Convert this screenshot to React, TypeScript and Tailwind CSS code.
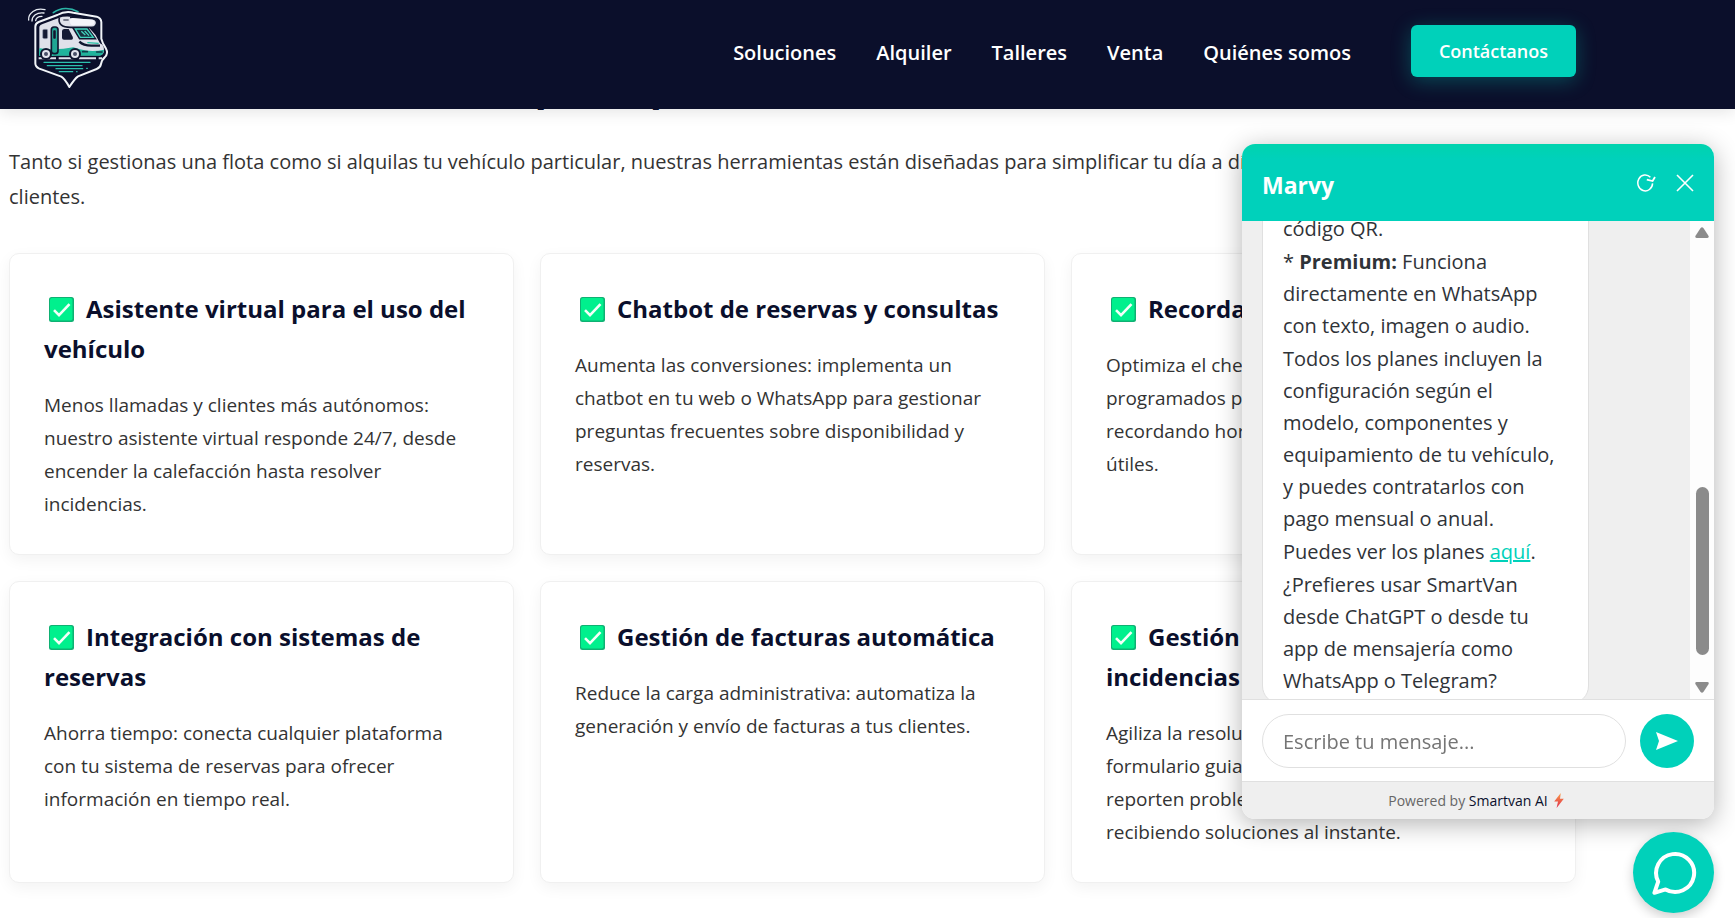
import { ReactNode } from "react";

const navLinks = ["Soluciones", "Alquiler", "Talleres", "Venta", "Quiénes somos"];

const features = [
  {
    title: "Asistente virtual para el uso del vehículo",
    text: "Menos llamadas y clientes más autónomos: nuestro asistente virtual responde 24/7, desde encender la calefacción hasta resolver incidencias.",
  },
  {
    title: "Chatbot de reservas y consultas",
    text: "Aumenta las conversiones: implementa un chatbot en tu web o WhatsApp para gestionar preguntas frecuentes sobre disponibilidad y reservas.",
  },
  {
    title: "Recordatorios automáticos",
    text: "Optimiza el check-in con mensajes breves programados para todos tus clientes, recordando horarios, documentos y consejos útiles.",
  },
  {
    title: "Integración con sistemas de reservas",
    text: "Ahorra tiempo: conecta cualquier plataforma con tu sistema de reservas para ofrecer información en tiempo real.",
  },
  {
    title: "Gestión de facturas automática",
    text: "Reduce la carga administrativa: automatiza la generación y envío de facturas a tus clientes.",
  },
  {
    title: "Gestión automatizada de incidencias",
    text: "Agiliza la resolución de averías mediante un formulario guiado para que todos los clientes reporten problemas desde cualquier lugar, recibiendo soluciones al instante.",
  },
];

function Logo() {
  return (
    <svg viewBox="0 0 285 285" className="h-[95px] w-[95px] shrink-0" fill="none" role="img" aria-label="SmartVan">
      <g stroke="#e6ebf2" strokeWidth="4" strokeLinecap="round">
        <path d="M26 60C24 40 46 22 75 29" />
        <path d="M36 63C36 48 50 36 72 39" />
        <path d="M47 62C48 54 56 49 66 49" />
      </g>
      <path d="M100 38C122 22 150 22 174 35" stroke="#2bb5a6" strokeWidth="5" strokeLinecap="round" />
      <path
        d="M56 66L112 45C126 37 146 35 160 38L230 50Q243 54 244 66V116Q248 132 258 146Q266 160 254 172Q246 178 243 192Q241 203 230 207L174 229Q164 236 148 261Q134 236 124 230L58 206Q46 201 46 190V80Q46 70 56 66Z"
        stroke="#f1f4f8"
        strokeWidth="6"
        strokeLinejoin="round"
      />
      <path d="M58 80Q60 74 68 72L118 53Q128 49 150 50L222 57Q232 60 230 72Q228 82 216 82H206L226 104L240 130Q252 134 252 150Q252 164 240 166H58Z" fill="#dfe1ea" />
      <path d="M58 145Q110 152 160 142L180 148Q215 158 252 149Q251 164 240 167H58Z" fill="#20b49c" />
      <path d="M58 148Q84 150 100 146V168H58Z" fill="#25c0a4" />
      <path d="M118 53Q112 82 152 82H216Q230 80 230 68Q229 58 218 56L150 52" stroke="#10162f" strokeWidth="5" />
      <path d="M150 59Q150 54 158 54L216 59Q225 62 223 70Q221 76 213 76H160Q148 76 150 59Z" fill="#f4f5fa" />
      <path d="M130 60H146" stroke="#10162f" strokeWidth="3" />
      <path d="M236 68V100L226 86V74Z" fill="#10162f" />
      <rect x="68" y="88" width="15" height="28" rx="4" fill="#141a33" stroke="#9fa6b8" strokeWidth="2" />
      <rect x="94" y="81" width="20" height="80" rx="8" fill="#1fa593" stroke="#10162f" strokeWidth="5" />
      <rect x="99" y="90" width="9" height="27" rx="3" fill="#10162f" stroke="#62d8c6" strokeWidth="1" />
      <path d="M126 92Q127 87 133 87H146L158 110Q161 118 154 119H132Q126 119 126 113Z" fill="#141a33" />
      <path d="M160 85H204L226 116H179Z" fill="#10162f" stroke="#10162f" strokeWidth="5" />
      <path d="M166 87H201L220 112H181Z" fill="#17303f" stroke="#42d4bf" strokeWidth="4" />
      <path d="M184 94L196 105M194 93L207 107" stroke="#42d4bf" strokeWidth="4" />
      <path d="M178 125Q190 137 214 137H240" stroke="#10162f" strokeWidth="7" />
      <path d="M202 128L236 130" stroke="#25c0a4" strokeWidth="4" />
      <path d="M188 155H202M230 156H246" stroke="#0f3c4a" strokeWidth="5" strokeLinecap="round" />
      <path d="M56 175H246" stroke="#dfe3ec" strokeWidth="6" strokeDasharray="52 8" />
      {[78, 165].map((x) => (
        <g key={x}>
          <circle cx={x} cy="162" r="18" fill="#10162f" />
          <circle cx={x} cy="162" r="12" fill="#e3e5ee" />
          <circle cx={x} cy="162" r="6" fill="#4a5068" />
        </g>
      ))}
      <g stroke="#2cc0ae" strokeWidth="4" strokeLinecap="round">
        <path d="M72 187H210M82 197H186M200 205H202M108 206H188M118 215H158M170 215H171" />
      </g>
    </svg>
  );
}

function CheckMark() {
  return (
    <svg viewBox="0 0 25 25" className="mr-3 ml-[5px] inline-block size-[25px] align-[-4px]" aria-hidden="true">
      <rect width="25" height="25" rx="2.5" fill="#0fb173" />
      <rect x="1" y="1" width="22.5" height="22.5" rx="2" fill="#00f08d" />
      <path d="M5 13.2L10 18.2L20.5 7.2" fill="none" stroke="#f4fff9" strokeWidth="2.6" />
    </svg>
  );
}

function FeatureCard({ title, children }: { title: string; children: ReactNode }) {
  return (
    <article className="rounded-[10px] border border-[#f0f0f0] bg-white px-[34px] pt-[35px] pb-[33px] shadow-[0_5px_15px_rgba(0,0,0,0.05)]">
      <h3 className="mb-5 text-2xl leading-10 font-bold text-[#0a0f2c]">
        <CheckMark />
        {title}
      </h3>
      <p className="text-[19px] leading-[33px]">{children}</p>
    </article>
  );
}

function ScrollTrack() {
  return (
    <div className="flex w-6 shrink-0 flex-col items-center bg-[#fdfdfd] py-1.5" aria-hidden="true">
      <svg viewBox="0 0 14 11" className="h-[11px] w-3.5" fill="#8b8b8b">
        <path d="M5.6 1Q7-.6 8.4 1L13.6 9Q14.2 11 12.4 11H1.6Q-.2 11 .4 9Z" />
      </svg>
      <div className="flex grow flex-col justify-end pb-[27px]">
        <div className="h-[168px] w-[13px] rounded-full bg-[#8b8b8b]" />
      </div>
      <svg viewBox="0 0 14 11" className="h-[11px] w-3.5 rotate-180" fill="#8b8b8b">
        <path d="M5.6 1Q7-.6 8.4 1L13.6 9Q14.2 11 12.4 11H1.6Q-.2 11 .4 9Z" />
      </svg>
    </div>
  );
}

function ChatWidget() {
  return (
    <section
      aria-label="Chat con Marvy"
      className="fixed right-[21px] bottom-[99px] z-20 flex h-[675px] w-[472px] flex-col overflow-hidden rounded-[13px] bg-white shadow-[0_5px_26px_rgba(0,0,0,0.3)]"
    >
      <header className="flex h-[77px] shrink-0 items-center bg-linear-to-b from-[#00d3ae] to-[#00d1bb] to-20% px-5 text-white">
        <h2 className="grow pt-1 text-[23px] leading-8 font-bold">Marvy</h2>
        <button type="button" aria-label="Reiniciar conversación" className="mr-5">
          <svg viewBox="0 0 20 18" className="h-[18px] w-5" fill="none" stroke="currentColor" strokeWidth="1.5">
            <path d="M14.4 3.2A7.4 8 0 1 0 16.6 9.4" />
            <path d="M10.8 5.6L16.6 7L19 3" strokeWidth="1.8" />
          </svg>
        </button>
        <button type="button" aria-label="Cerrar chat">
          <svg viewBox="0 0 18 18" className="size-[18px]" fill="none" stroke="currentColor" strokeWidth="1.6">
            <path d="M1 1L17 17M17 1L1 17" />
          </svg>
        </button>
      </header>

      <div className="flex min-h-0 grow bg-[#efefef]">
        <div className="flex min-h-0 grow flex-col justify-end overflow-hidden pl-5">
          <div className="-mb-[5px] w-[327px] shrink-0 space-y-px rounded-[18px] border border-[#e0e0e0] bg-white px-5 pt-5 pb-1.5 text-xl leading-8 text-[#2f3338]">
            <p>código QR.</p>
            <p>
              * <strong>Premium:</strong> Funciona directamente en WhatsApp con texto, imagen o audio.
            </p>
            <p>
              Todos los planes incluyen la configuración según el modelo, componentes y equipamiento de tu vehículo, y
              puedes contratarlos con pago mensual o anual.
            </p>
            <p>
              Puedes ver los planes{" "}
              <a href="#planes" className="text-[#00d1ba] underline">
                aquí
              </a>
              .
            </p>
            <p>¿Prefieres usar SmartVan desde ChatGPT o desde tu app de mensajería como WhatsApp o Telegram?</p>
          </div>
        </div>
        <ScrollTrack />
      </div>

      <form className="flex shrink-0 items-center gap-3.5 border-t border-[#e0e0e0] px-5 pt-3.5 pb-[13px]" onSubmit={(e) => e.preventDefault()}>
        <input
          type="text"
          aria-label="Mensaje"
          placeholder="Escribe tu mensaje..."
          className="h-[54px] min-w-0 grow rounded-full border border-[#e0e0e0] px-5 text-xl placeholder:text-[#757575]"
        />
        <button
          type="submit"
          aria-label="Enviar"
          className="flex size-[54px] shrink-0 items-center justify-center rounded-full bg-[#00d1ba] text-white"
        >
          <svg viewBox="0 0 22 18" className="h-[18px] w-[22px]" fill="currentColor">
            <path d="M0 0L22 9L0 18L3 9Z" />
          </svg>
        </button>
      </form>

      <footer className="flex h-[38px] shrink-0 items-center justify-center border-t border-[#e0e0e0] bg-[#efefef] pr-1 text-sm text-[#666]">
        <span>
          Powered by{" "}
          <a href="#smartvan" className="text-[#0a0f2c]">
            Smartvan AI
          </a>
        </span>
        <svg viewBox="0 0 10 15" className="ml-1.5 h-[15px] w-2.5" aria-hidden="true">
          <defs>
            <linearGradient id="bolt" x1="0" y1="0" x2="0" y2="1">
              <stop offset="0" stopColor="#f9a04a" />
              <stop offset="1" stopColor="#e0284a" />
            </linearGradient>
          </defs>
          <path d="M6.8 0L.2 8.4H4L2.6 15L9.8 5.8H6Z" fill="url(#bolt)" />
        </svg>
      </footer>
    </section>
  );
}

export default function App() {
  return (
    <div className="min-h-screen bg-white font-['Open_Sans','Noto_Sans',sans-serif] text-[#333]">
      <header className="sticky top-0 z-10 flex h-[109px] items-center bg-[#0b0f2b] pr-[159px] pb-2 pl-5 shadow-[0_2px_16px_rgba(0,0,0,0.12)]">
        <a href="#inicio" className="mr-auto self-start">
          <Logo />
        </a>
        <nav className="flex gap-10 pt-1 text-xl font-semibold text-white">
          {navLinks.map((label) => (
            <a key={label} href="#menu">
              {label}
            </a>
          ))}
        </nav>
        <a
          href="#contacto"
          className="ml-[60px] flex h-[52px] items-center rounded-md bg-[#00d1ba] px-7 text-lg font-semibold text-white shadow-[0_4px_20px_rgba(0,209,186,0.3)]"
        >
          Contáctanos
        </a>
      </header>

      <main className="-mt-[47px] mr-[159px] ml-[9px]">
        <h2 className="mb-[34px] text-[40px] leading-12 font-bold text-[#0a0f2c]">Funciones Smartvan de alquiler para todos</h2>
        <p className="mb-[39px] text-xl leading-[35px]">
          Tanto si gestionas una flota como si alquilas tu vehículo particular, nuestras herramientas están diseñadas
          para simplificar tu día a día y mejorar la experiencia de tus clientes.
        </p>
        <div className="grid grid-cols-3 gap-[26px]">
          {features.map((f) => (
            <FeatureCard key={f.title} title={f.title}>
              {f.text}
            </FeatureCard>
          ))}
        </div>
      </main>

      <ChatWidget />
      <button
        type="button"
        aria-label="Abrir chat"
        className="fixed right-[21px] bottom-[5px] z-20 flex size-[81px] items-center justify-center rounded-full bg-[#00d1ba] text-white shadow-[0_4px_12px_rgba(0,0,0,0.2)]"
      >
        <svg viewBox="0 0 46 46" className="size-[46px]" fill="none" stroke="currentColor" strokeWidth="4" strokeLinejoin="round">
          <path d="M7.2 31.6A19 19 0 1 1 14.6 39.4L3.4 42.8Z" />
        </svg>
      </button>
    </div>
  );
}
